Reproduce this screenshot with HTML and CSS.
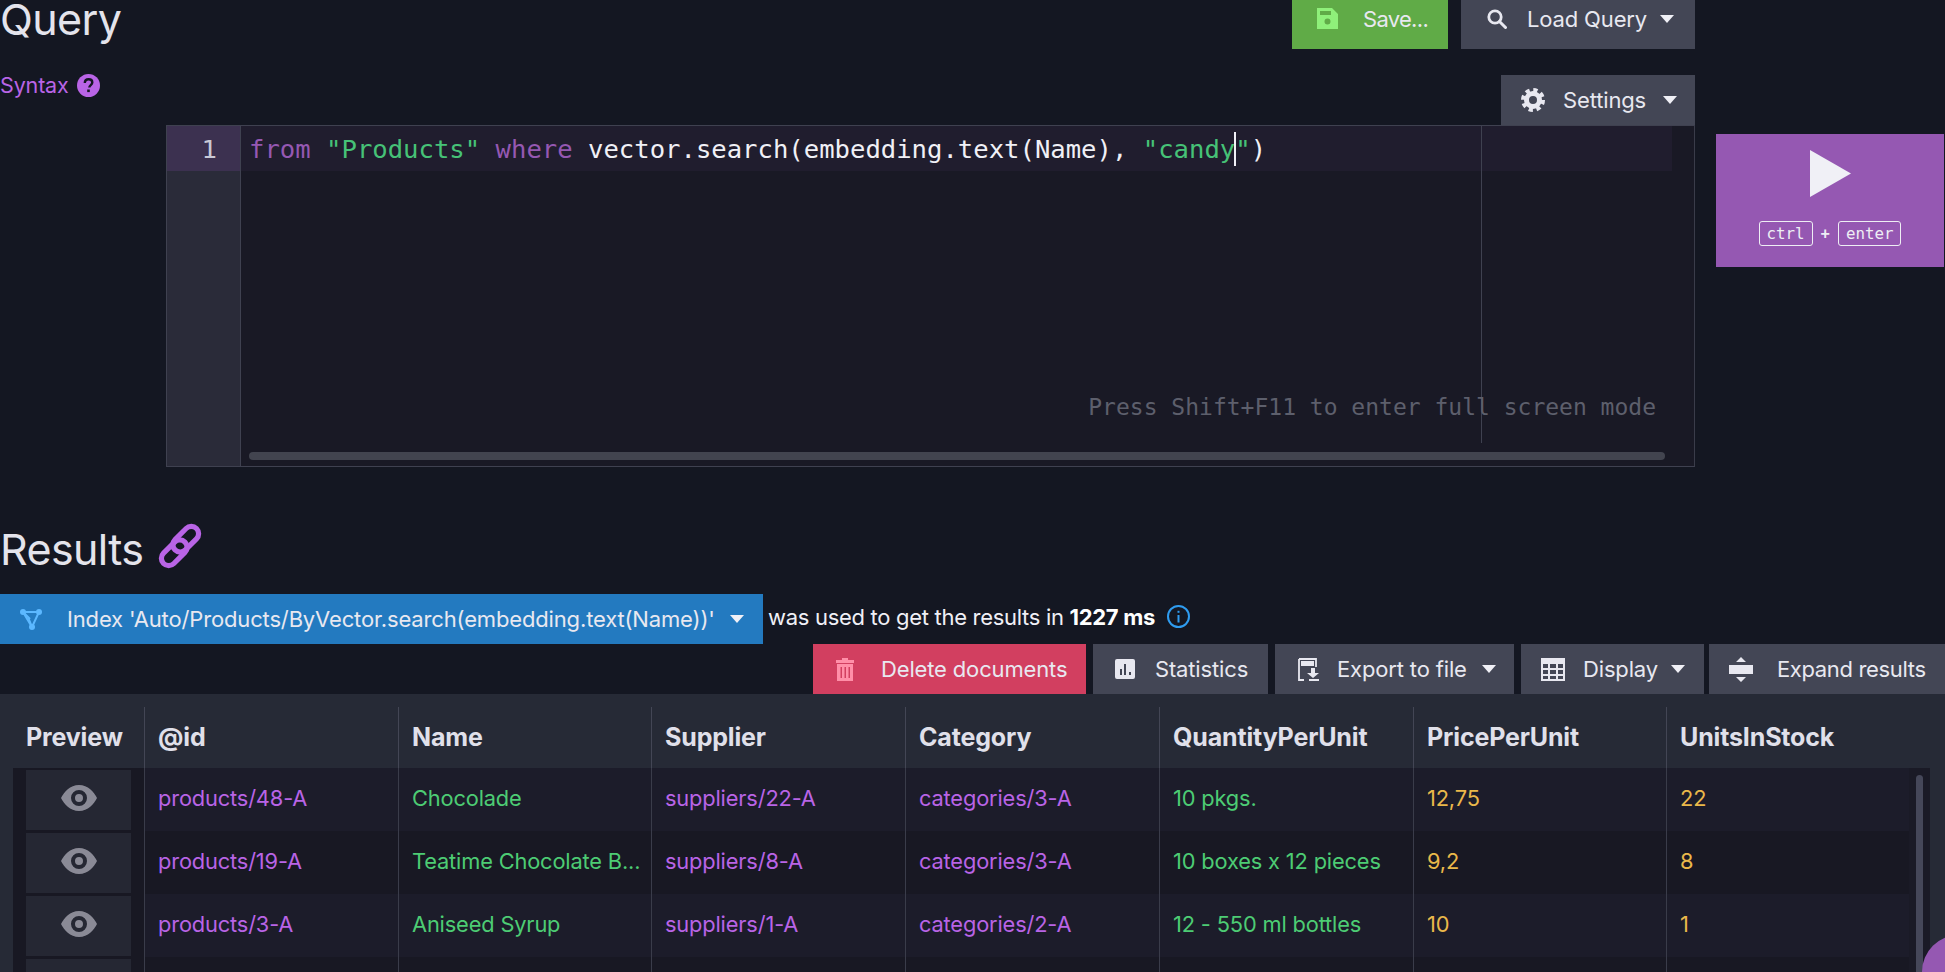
FILE: index.html
```html
<!DOCTYPE html>
<html lang="en">
<head>
<meta charset="utf-8">
<title>Query</title>
<link rel="stylesheet" href="styles.css">
</head>
<body>
<svg class="defs" width="0" height="0" aria-hidden="true">
  <defs>
    <symbol id="eye" viewBox="0 0 36 28"><path fill-rule="evenodd" d="M18 1C9 1 3 8 0 14c3 6 9 13 18 13s15-7 18-13C33 8 27 1 18 1zm0 5a8 8 0 1 1 0 16 8 8 0 0 1 0-16zm0 4a4 4 0 1 0 0 8 4 4 0 0 0 0-8z"/></symbol>
    <symbol id="caret" viewBox="0 0 14 8"><path d="M0 0h14L7 8z"/></symbol>
  </defs>
</svg>
<main class="page">
  <section class="query">
    <div class="query-main">
      <header class="query-head">
        <h1 class="title-query">Query</h1>
        <div class="actions">
          <button class="btn btn-save">
            <svg class="ico ico-save" viewBox="0 0 21 21"><path fill-rule="evenodd" d="M0 0h15l6 6v15H0zM3 3v4h11V3zm7.500 7.500a3 3 0 1 0 0 6 3 3 0 0 0 0-6z"/></svg>
            <span class="label-save">Save...</span>
          </button>
          <button class="btn btn-load">
            <svg class="ico ico-search" viewBox="0 0 20 20"><circle cx="8" cy="8" r="6.200" fill="none" stroke="currentColor" stroke-width="2.800"/><path d="M12.500 12.500l6 6" stroke="currentColor" stroke-width="3" stroke-linecap="round"/></svg>
            <span class="label-load">Load Query</span>
            <svg class="caret"><use href="#caret"/></svg>
          </button>
        </div>
      </header>
      <div class="syntax-row">
        <a class="syntax">Syntax
          <svg class="ico-help" viewBox="0 0 23 23"><circle cx="11.500" cy="11.500" r="11.500" fill="#b964e6"/><path d="M7.800 9c0-2.400 1.600-3.800 3.800-3.800 2.200 0 3.700 1.300 3.700 3.200 0 2.600-3 2.700-3 5.100" fill="none" stroke="#141722" stroke-width="2.400"/><rect x="10.200" y="15.500" width="2.600" height="2.600" fill="#141722"/></svg>
        </a>
        <button class="btn btn-settings">
          <svg class="ico ico-gear" viewBox="0 0 24 24"><circle cx="12" cy="12" r="6.500" fill="none" stroke="currentColor" stroke-width="5"/><circle cx="12" cy="12" r="10" fill="none" stroke="currentColor" stroke-width="4" stroke-dasharray="4.200 3.654"/></svg>
          <span class="label-settings">Settings</span>
          <svg class="caret"><use href="#caret"/></svg>
        </button>
      </div>
      <div class="editor">
        <div class="gutter"><div class="gutter-active">1</div></div>
        <div class="code">
          <div class="code-active"><span class="kw">from</span> <span class="str">"Products"</span> <span class="kw">where</span> vector.search(embedding.text(Name), <span class="str">"candy</span><span class="cursor"></span><span class="str">"</span>)</div>
        </div>
        <div class="print-margin"></div>
        <div class="hint">Press Shift+F11 to enter full screen mode</div>
        <div class="hscroll"></div>
      </div>
    </div>
    <button class="run">
      <svg class="run-play" viewBox="0 0 41 47"><path d="M0 0l41 23.500L0 47z"/></svg>
      <span class="run-keys"><kbd class="key">ctrl</kbd><span class="plus">+</span><kbd class="key">enter</kbd></span>
    </button>
  </section>

  <section class="results">
    <h2 class="title-results">Results
      <svg class="ico-link" viewBox="0 0 44 44"><g fill="none" stroke="#b964e6" stroke-width="5"><rect x="20.500" y="1" width="14" height="29" rx="7" transform="rotate(45 27.500 15.500)"/><rect x="9.500" y="14" width="14" height="29" rx="7" transform="rotate(45 16.500 28.500)"/></g></svg>
    </h2>
    <div class="index-row">
      <button class="btn btn-index">
        <svg class="ico ico-index" viewBox="0 0 22 21"><g fill="none" stroke="#5cb8ff" stroke-width="2"><path d="M3 3h16l-7 15z"/><path d="M12 18L8 8M3 3l7 7"/></g><g fill="#5cb8ff"><circle cx="3" cy="3" r="3"/><circle cx="19" cy="3" r="3"/><circle cx="12" cy="18" r="3"/></g></svg>
        <span class="label-index">Index 'Auto/Products/ByVector.search(embedding.text(Name))'</span>
        <svg class="caret"><use href="#caret"/></svg>
      </button>
      <p class="used">was used to get the results in <strong>1227 ms</strong></p>
      <svg class="ico-info" viewBox="0 0 23 23"><circle cx="11.500" cy="11.500" r="10.500" fill="none" stroke="#2f9cf0" stroke-width="2"/><rect x="10.500" y="10" width="2" height="7.500" fill="#2f9cf0"/><rect x="10.500" y="5.800" width="2" height="2" fill="#2f9cf0"/></svg>
    </div>
    <div class="toolbar">
      <button class="btn btn-delete">
        <svg class="ico ico-trash" viewBox="0 0 18 23"><path fill-rule="evenodd" d="M6 0h6v2h6v3H0V2h6zM1 6h16v17H1zm3.500 3v11h1.500V9zm4 0v11H10V9zm4 0v11H14V9z"/></svg>
        <span>Delete documents</span>
      </button>
      <button class="btn btn-stats">
        <svg class="ico ico-stats" viewBox="0 0 20 20"><path fill-rule="evenodd" d="M2 0h16a2 2 0 0 1 2 2v16a2 2 0 0 1-2 2H2a2 2 0 0 1-2-2V2a2 2 0 0 1 2-2zm3 10v6h2v-6zm4-5v11h2V5zm5 8v3h2v-3z"/></svg>
        <span>Statistics</span>
      </button>
      <button class="btn btn-export">
        <svg class="ico ico-export" viewBox="0 0 23 23"><path d="M1 1h17v8M1 1v21h5M11 22h10" fill="none" stroke="currentColor" stroke-width="1.800"/><rect x="3" y="3" width="13" height="5" fill="currentColor"/><path d="M13 10h4v5h4l-6 5-6-5h4z"/></svg>
        <span>Export to file</span>
        <svg class="caret"><use href="#caret"/></svg>
      </button>
      <button class="btn btn-display">
        <svg class="ico ico-table" viewBox="0 0 24 23"><path fill-rule="evenodd" d="M0 0h24v23H0zM2 6v4h5V6zm7 0v4h6V6zm8 0v4h5V6zM2 12v4h5v-4zm7 0v4h6v-4zm8 0v4h5v-4zM2 18v3h5v-3zm7 0v3h6v-3zm8 0v3h5v-3z"/></svg>
        <span>Display</span>
        <svg class="caret"><use href="#caret"/></svg>
      </button>
      <button class="btn btn-expand">
        <svg class="ico ico-expand" viewBox="0 0 24 25"><path d="M12 0l5 5H7zM0 8h24v9H0zM12 25l-5-5h10z"/></svg>
        <span>Expand results</span>
      </button>
    </div>
    <div class="grid">
      <div class="grid-head">
        <div class="hcell">Preview</div>
        <div class="hcell">@id</div>
        <div class="hcell">Name</div>
        <div class="hcell">Supplier</div>
        <div class="hcell">Category</div>
        <div class="hcell">QuantityPerUnit</div>
        <div class="hcell">PricePerUnit</div>
        <div class="hcell">UnitsInStock</div>
      </div>
      <div class="grid-body">
        <div class="row">
          <div class="cell cell-preview"><span class="preview"><svg class="eye"><use href="#eye"/></svg></span></div>
          <div class="cell link">products/48-A</div>
          <div class="cell str-cell">Chocolade</div>
          <div class="cell link">suppliers/22-A</div>
          <div class="cell link">categories/3-A</div>
          <div class="cell str-cell">10 pkgs.</div>
          <div class="cell num">12,75</div>
          <div class="cell num">22</div>
        </div>
        <div class="row">
          <div class="cell cell-preview"><span class="preview"><svg class="eye"><use href="#eye"/></svg></span></div>
          <div class="cell link">products/19-A</div>
          <div class="cell str-cell">Teatime Chocolate B...</div>
          <div class="cell link">suppliers/8-A</div>
          <div class="cell link">categories/3-A</div>
          <div class="cell str-cell">10 boxes x 12 pieces</div>
          <div class="cell num">9,2</div>
          <div class="cell num">8</div>
        </div>
        <div class="row">
          <div class="cell cell-preview"><span class="preview"><svg class="eye"><use href="#eye"/></svg></span></div>
          <div class="cell link">products/3-A</div>
          <div class="cell str-cell">Aniseed Syrup</div>
          <div class="cell link">suppliers/1-A</div>
          <div class="cell link">categories/2-A</div>
          <div class="cell str-cell">12 - 550 ml bottles</div>
          <div class="cell num">10</div>
          <div class="cell num">1</div>
        </div>
        <div class="row">
          <div class="cell cell-preview"><span class="preview"></span></div>
          <div class="cell"></div><div class="cell"></div><div class="cell"></div>
          <div class="cell"></div><div class="cell"></div><div class="cell"></div><div class="cell"></div>
        </div>
        <div class="vscroll"></div>
      </div>
      <div class="fab"></div>
    </div>
  </section>
</main>
</body>
</html>
```
FILE: styles.css
```css
* { box-sizing: border-box; }
html, body { margin: 0; height: 972px; overflow: hidden; }
body {
  background: #141722;
  color: #e8e8f0;
  font-family: Inter, "Liberation Sans", sans-serif;
  font-size: 22px;
  letter-spacing: -0.15px;
}
.defs { position: absolute; }
.page { width: 1945px; height: 972px; overflow: hidden; display: flex; flex-direction: column; }

.query { display: flex; height: 467px; }
.query-main { width: 1695px; display: flex; flex-direction: column; }
.query-head { height: 49px; display: flex; justify-content: space-between; }
.title-query {
  margin: 0;
  font-size: 43px;
  font-weight: 400;
  line-height: 38px;
  letter-spacing: -0.6px;
  color: #e4e4ec;
}
.actions { display: flex; gap: 13px; }

.btn {
  display: flex;
  align-items: center;
  border: 0;
  padding: 0;
  height: 50px;
  color: #e8e8f0;
  background: #434655;
  font: inherit;
  letter-spacing: inherit;
  text-align: left;
  white-space: nowrap;
}
.ico { flex: none; fill: currentColor; }
.caret { flex: none; width: 14px; height: 8px; fill: #f0f0f6; }

.btn-save { width: 156px; height: 49px; padding: 0 0 12px 25px; background: #60ab47; }
.ico-save { width: 21px; height: 21px; margin: 0 25px 0 0; color: #8ff07a; }
.label-save { letter-spacing: -0.7px; }
.btn-load { width: 234px; height: 49px; padding: 0 0 12px 26px; }
.ico-search { width: 20px; height: 20px; margin-right: 20px; }
.label-load { width: 133px; }

.syntax-row { height: 77px; display: flex; justify-content: space-between; align-items: flex-end; position: relative; }
.syntax { align-self: flex-start; display: flex; align-items: center; gap: 8px; height: 22px; margin-top: 25px; font-size: 21.500px; color: #b964e6; }
.ico-help { width: 23px; height: 23px; }
.btn-settings { width: 194px; height: 51px; padding-left: 20px; }
.ico-gear { width: 24px; height: 24px; margin-right: 18px; }
.label-settings { width: 100px; }

.editor {
  position: relative;
  margin: -1px 0 0 166px;
  height: 343px;
  display: flex;
  background: #191925;
  border: 1px solid #3f4150;
  border-right-color: #3a3c4a;
  font-family: "DejaVu Sans Mono", "Liberation Mono", monospace;
  font-size: 25.600px;
  letter-spacing: 0;
}
.gutter { width: 74px; flex: none; background: #2a2b39; border-right: 1px solid #3f4150; }
.gutter-active {
  height: 45px;
  line-height: 47px;
  padding-right: 23px;
  text-align: right;
  background: #3c3150;
  color: #c9c9d6;
}
.code { flex: 1; }
.code-active {
  width: 1431px;
  height: 45px;
  line-height: 47px;
  padding-left: 8px;
  background: #201d2e;
  white-space: pre;
  color: #f0f0f6;
}
.kw { color: #9558b2; }
.str { color: #46c277; }
.cursor { display: inline-block; width: 0; height: 32px; vertical-align: -7px; box-shadow: 0 0 0 1px #f0f0f6; }
.print-margin { position: absolute; left: 1314px; top: 0; bottom: 23px; width: 1px; background: #3f4150; }
.hint {
  position: absolute;
  right: 38px;
  top: 266px;
  font-size: 23px;
  line-height: 30px;
  color: #5d5f6c;
  white-space: pre;
}
.hscroll { position: absolute; left: 82px; right: 29px; bottom: 6px; height: 8px; border-radius: 4px; background: #42444f; }

.run {
  margin: 134px 0 0 21px;
  width: 228px;
  height: 133px;
  border: 0;
  padding: 16px 0 0;
  background: #9558b2;
  display: flex;
  flex-direction: column;
  align-items: center;
}
.run-play { width: 41px; height: 47px; fill: #f0f0f6; }
.run-keys { display: flex; align-items: center; gap: 8px; margin-top: 24px; }
.key {
  display: block;
  height: 25px;
  padding: 0 7px;
  border: 1px solid #eeeef4;
  border-radius: 3px;
  font-family: "DejaVu Sans Mono", monospace;
  font-size: 15.800px;
  line-height: 23px;
  color: #eeeef4;
}
.plus { font-weight: 700; font-size: 16px; color: #eeeef4; }

.results { display: flex; flex-direction: column; }
.title-results {
  height: 127px;
  margin: 0;
  padding-top: 57px;
  display: flex;
  align-items: flex-start;
  gap: 14px;
  font-size: 43px;
  font-weight: 400;
  line-height: 50px;
  letter-spacing: -0.6px;
  color: #e4e4ec;
}
.ico-link { width: 46px; height: 46px; margin-top: -1px; }

.index-row { height: 50px; display: flex; align-items: center; }
.btn-index { width: 763px; padding-left: 20px; background: #237ac0; }
.ico-index { width: 22px; height: 21px; margin-right: 25px; }
.label-index { width: 663px; }
.used { margin: 0 0 5px 5px; letter-spacing: -0.3px; color: #f0f0f6; }
.used strong { font-weight: 700; color: #fff; }
.ico-info { width: 23px; height: 23px; margin: 0 0 6px 12px; }

.toolbar { height: 50px; display: flex; justify-content: flex-end; gap: 7px; }
.btn-delete { width: 273px; padding-left: 23px; background: #d23f60; }
.ico-trash { width: 18px; height: 23px; margin-right: 27px; color: #ff8fa8; }
.btn-stats { width: 175px; padding-left: 22px; }
.ico-stats { width: 20px; height: 20px; margin-right: 20px; }
.btn-export { width: 239px; padding-left: 23px; }
.ico-export { width: 23px; height: 23px; margin-right: 16px; }
.btn-export span { width: 145px; }
.btn-display { width: 183px; padding-left: 20px; }
.ico-table { width: 24px; height: 23px; margin-right: 18px; }
.btn-display span { width: 88px; }
.btn-expand { width: 236px; margin-left: -2px; padding-left: 20px; }
.ico-expand { width: 24px; height: 25px; margin-right: 24px; }
.btn-expand span { letter-spacing: -0.35px; }

.grid { position: relative; height: 278px; background: #262a36; }
.grid-head, .row {
  display: grid;
  grid-template-columns: 131px 254px 253px 254px 254px 254px 253px 1fr;
}
.grid-head { height: 74px; padding: 13px 36px 0 13px; }
.hcell {
  display: flex;
  align-items: center;
  padding: 0 0 2px 13px;
  font-size: 25px;
  font-weight: 700;
  color: #e0e0ea;
  border-left: 1px solid #434655;
}
.hcell:first-child { border-left: 0; }
.grid-body { position: relative; margin: 0 15px 0 13px; background: #1a1a26; padding-right: 21px; }
.row { height: 63px; background: #1c1c2a; }
.row:nth-child(even) { background: #181823; }
.cell {
  display: flex;
  align-items: center;
  padding: 0 0 4px 13px;
  font-size: 21.800px;
  white-space: nowrap;
  overflow: hidden;
  border-left: 1px solid #3a3c4a;
}
.cell-preview { border-left: 0; padding: 2px 0 1px 13px; background: #181823; }
.preview { width: 105px; height: 60px; display: flex; align-items: center; justify-content: center; background: #252733; }
.eye { width: 36px; height: 28px; fill: #8a8a96; margin-top: -4px; }
.link { color: #b964e6; }
.str-cell { color: #4dcc74; }
.num { color: #eab84a; }
.vscroll { position: absolute; right: 7px; top: 7px; bottom: 0; width: 7px; border-radius: 4px 4px 0 0; background: #454759; }
.fab { position: absolute; left: 1922px; top: 241px; width: 74px; height: 74px; border-radius: 50%; background: #9558b2; }
```
